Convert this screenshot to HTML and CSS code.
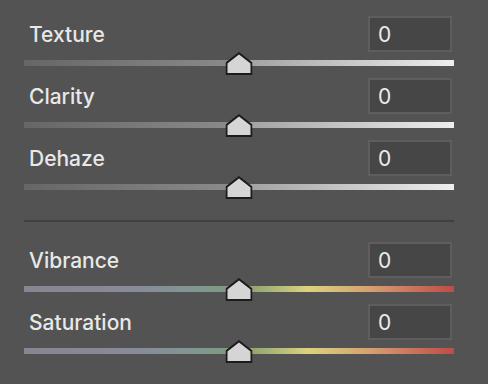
FILE: index.html
```html
<!DOCTYPE html>
<html lang="en">
<head>
    <meta charset="UTF-8">
    <meta name="viewport" content="width=device-width, initial-scale=1.0">
    <title>Presence</title>
    <link rel="stylesheet" href="styles.css">
</head>
<body>

    <div class="panel">
        <div class="row">
            <div class="row-head">
                <span class="label">Texture</span>
                <input class="value" type="text" value="0">
            </div>
            <div class="track gray">
                <svg class="thumb" viewBox="0 0 27 23"><polygon points="13.5,1.2 26,11 26,22 1,22 1,11"/></svg>
            </div>
        </div>
        <div class="row">
            <div class="row-head">
                <span class="label">Clarity</span>
                <input class="value" type="text" value="0">
            </div>
            <div class="track gray">
                <svg class="thumb" viewBox="0 0 27 23"><polygon points="13.5,1.2 26,11 26,22 1,22 1,11"/></svg>
            </div>
        </div>
        <div class="row">
            <div class="row-head">
                <span class="label">Dehaze</span>
                <input class="value" type="text" value="0">
            </div>
            <div class="track gray">
                <svg class="thumb" viewBox="0 0 27 23"><polygon points="13.5,1.2 26,11 26,22 1,22 1,11"/></svg>
            </div>
        </div>

        <hr class="divider">

        <div class="row">
            <div class="row-head">
                <span class="label">Vibrance</span>
                <input class="value" type="text" value="0">
            </div>
            <div class="track color">
                <svg class="thumb" viewBox="0 0 27 23"><polygon points="13.5,1.2 26,11 26,22 1,22 1,11"/></svg>
            </div>
        </div>
        <div class="row">
            <div class="row-head">
                <span class="label">Saturation</span>
                <input class="value" type="text" value="0">
            </div>
            <div class="track color">
                <svg class="thumb" viewBox="0 0 27 23"><polygon points="13.5,1.2 26,11 26,22 1,22 1,11"/></svg>
            </div>
        </div>
    </div>

</body>
</html>
```

FILE: styles.css
```css
body {
    margin: 0;
    background-color: #535353;
    font-family: Inter, "Liberation Sans", sans-serif;
    color: #e8e8e8;
}
.panel {
    width: 430px;
    padding: 16px 0 0 24px;
}
.row {
    margin-bottom: 12px;
}
.row-head {
    display: flex;
    align-items: center;
    justify-content: space-between;
    height: 36px;
    padding: 0 2px 0 5px;
}
.label {
    font-size: 21px;
    font-weight: 500;
}
.value {
    box-sizing: border-box;
    width: 84px;
    height: 36px;
    padding: 0 0 0 8px;
    border: 2px solid #5e5e5e;
    background-color: #464646;
    color: #ececec;
    font-family: Inter, "Liberation Sans", sans-serif;
    font-size: 21px;
    outline: none;
}
.track {
    position: relative;
    height: 6px;
    margin-top: 8px;
}
.track.gray {
    background: linear-gradient(to right, #666666, #8a8a8a 48%, #a2a2a2 52%, #eeeeee);
}
.track.color {
    background: linear-gradient(to right, #8a8490, #888a98 25%, #7e9890 42%, #7f9a72 50%, #dcd27e 66%, #d4a272 80%, #c04a48);
}
.thumb {
    position: absolute;
    left: 50%;
    top: -8px;
    width: 27px;
    height: 23px;
    transform: translateX(-50%);
}
.thumb polygon {
    fill: #d5d5d5;
    stroke: #1c1c1c;
    stroke-width: 2;
    stroke-linejoin: miter;
}
.divider {
    height: 2px;
    margin: 30px 0 20px;
    border: none;
    background-color: #404040;
}
```
